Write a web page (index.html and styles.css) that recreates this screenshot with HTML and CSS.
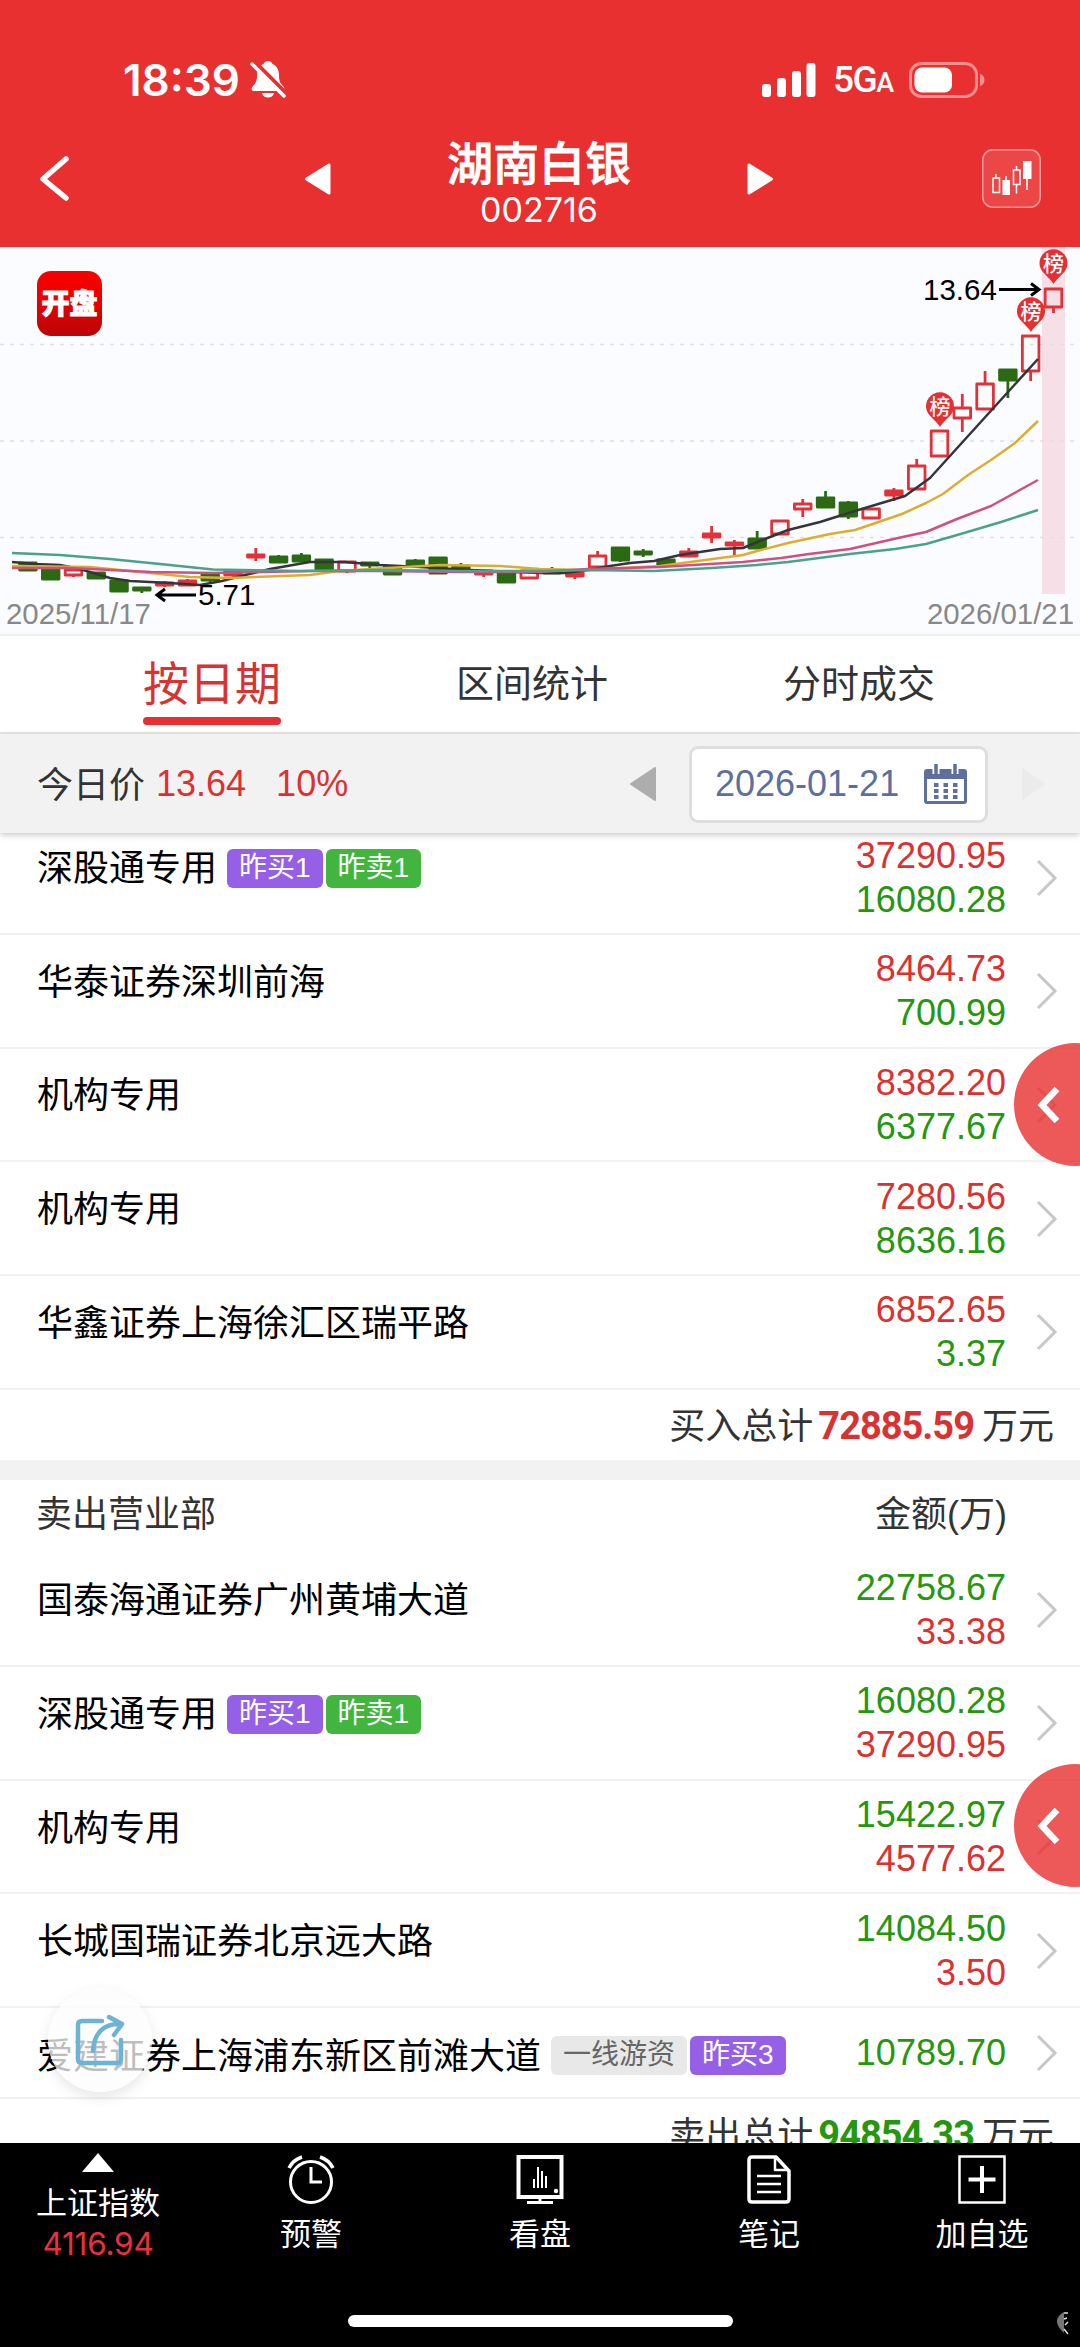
FILE: index.html
```html
<!DOCTYPE html>
<html lang="zh-CN">
<head>
    <meta charset="UTF-8">
    <title>湖南白银 002716</title>
    <link rel="stylesheet" href="styles.css">
</head>
<body>
    <div class="app">
        <header class="header">
            <div class="status-bar">
                <div class="status-left">
                    <span class="time">18:39</span>
                    <svg class="bell" width="36" height="40" viewBox="0 0 36 40">
                        <path d="M18 1c-2.500 0-4 1.500-4.500 3C9 6 7 10 7 15c0 6-1 8-4 11-2 2-2 5 1 5h28c3 0 3-3 1-5-3-3-4-5-4-11 0-5-2-9-6.500-11C22 2.500 20.500 1 18 1z" fill="#fff"/>
                        <path d="M12 33h12c-1 6-11 6-12 0z" fill="#fff"/>
                        <path d="M4 1L37 34" stroke="#e83030" stroke-width="4"/>
                        <path d="M2 4L34 36" stroke="#fff" stroke-width="3.500" stroke-linecap="round"/>
                    </svg>
                </div>
                <div class="status-right">
                    <svg width="54" height="34" viewBox="0 0 54 34" fill="#fff">
                        <rect x="0" y="21" width="9" height="13" rx="3"/>
                        <rect x="15" y="15" width="9" height="19" rx="3"/>
                        <rect x="30" y="8" width="9" height="26" rx="3"/>
                        <rect x="44.500" y="0" width="9" height="34" rx="3"/>
                    </svg>
                    <span class="network">5G<small>A</small></span>
                    <svg class="battery" width="77" height="36" viewBox="0 0 77 36">
                        <rect x="1.500" y="1.500" width="66" height="33" rx="11" fill="none" stroke="#f58f8f" stroke-width="3"/>
                        <rect x="5.500" y="5.500" width="37.500" height="25" rx="7.500" fill="#fff"/>
                        <path d="M71 12c6 1 6 11 0 12z" fill="#f58f8f"/>
                    </svg>
                </div>
            </div>
            <div class="nav-bar">
                <svg class="back" width="34" height="50" viewBox="0 0 34 50">
                    <path d="M29 5L6 25l23 19" fill="none" stroke="#fff" stroke-width="5.500" stroke-linecap="round" stroke-linejoin="round"/>
                </svg>
                <svg class="prev" width="28" height="34" viewBox="0 0 28 34">
                    <path d="M25 3v28L2.500 17z" fill="#fff" stroke="#fff" stroke-width="3" stroke-linejoin="round"/>
                </svg>
                <div class="stock">
                    <h1>湖南白银</h1>
                    <span>002716</span>
                </div>
                <svg class="next" width="28" height="34" viewBox="0 0 28 34">
                    <path d="M3 3v28l22.500-14z" fill="#fff" stroke="#fff" stroke-width="3" stroke-linejoin="round"/>
                </svg>
                <div class="kline-btn">
                    <svg width="59" height="59" viewBox="0 0 59 59" fill="none" stroke="#fff" stroke-width="1.500">
                        <path d="M14 25v4M24 27v5M34.500 17v4M34.500 35.500v9M45 30v11"/>
                        <rect x="11" y="29" width="6.500" height="14.500"/>
                        <rect x="20.500" y="31" width="7.500" height="15" fill="#fff" stroke="none"/>
                        <rect x="31.500" y="21" width="6.500" height="14.500"/>
                        <rect x="41" y="12" width="8.500" height="18" fill="#fff" stroke="none"/>
                    </svg>
                </div>
            </div>
        </header>

        <section class="chart">
            <svg id="kline" width="1080" height="389" viewBox="0 247 1080 389">
                <rect x="1042" y="247" width="23" height="347" fill="#f6dfe6"/>
                <g stroke="#dcdfe6" stroke-width="1.500" stroke-dasharray="4 6">
                    <path d="M0 347.500H1080" transform="translate(0 -3)"/>
                    <path d="M0 441H1080"/>
                    <path d="M0 537.500H1080"/>
                </g>
                <g id="candles"></g>
                <g fill="none" stroke-width="2.500" stroke-linejoin="round">
                    <polyline stroke="#33353b" points="12,562 35,564 60,565 80,569 110,578 130,581 170,583 200,585 222,581 245,575 270,569 310,562 330,562 345,562 380,565 420,567 470,570 540,573 565,573 588,570 610,566 630,563 654,561 680,555 720,549 743,548 765,539 788,530 820,522 855,511 905,496 930,478 998,403 1038,359"/>
                    <polyline stroke="#dcae30" points="12,566 90,567 130,571 190,577 230,578 310,575 340,571 370,569 440,565 500,566 540,569 588,570 660,566 743,555 757,551 788,543 830,534 855,530 902,514 926,503 943,494 968,475 991,460 1015,443 1038,421"/>
                    <polyline stroke="#cf4f84" points="12,568 70,568 151,572 213,573 262,572 310,571 380,571 460,572 540,572 588,569 660,567 743,562 781,558 809,554 850,549 898,538 926,532 957,519 991,506 1038,480"/>
                    <polyline stroke="#4aa28a" points="12,553 60,555 110,559 160,564 213,569.500 300,571 380,570 460,571 540,571 588,570 654,571 712,568 757,565 788,562 850,554 895,549 926,544 964,533 1001,522 1038,510"/>
                </g>
                <g fill="none" stroke="#000" stroke-width="3">
                    <path d="M196 595H158M165 589l-8 6 8 6"/>
                    <path d="M999 289.500H1038M1031 283.500l8 6-8 6"/>
                </g>
                <g class="price-mark">
                    <text x="198" y="605">5.71</text>
                    <text x="923" y="300">13.64</text>
                </g>
                <g class="badges">
                    <g transform="translate(1053.500 263)"><path d="M-13.500 4a14 14 0 1 1 27 0C11 11 4 14 0 21-4 14-11 11-13.500 4z"/><text y="7.500">榜</text></g>
                    <g transform="translate(1031 311)"><path d="M-13.500 4a14 14 0 1 1 27 0C11 11 4 14 0 21-4 14-11 11-13.500 4z"/><text y="7.500">榜</text></g>
                    <g transform="translate(940 406)"><path d="M-13.500 4a14 14 0 1 1 27 0C11 11 4 14 0 21-4 14-11 11-13.500 4z"/><text y="7.500">榜</text></g>
                </g>
                <g class="axis">
                    <text x="6" y="624">2025/11/17</text>
                    <text x="1074" y="624" text-anchor="end">2026/01/21</text>
                </g>
            </svg>
            <div class="logo">开盘</div>
        </section>

        <nav class="tabs">
            <a class="tab active">按日期</a>
            <a class="tab">区间统计</a>
            <a class="tab">分时成交</a>
        </nav>

        <div class="date-bar">
            <span class="label">今日价</span>
            <span class="red price">13.64</span>
            <span class="red percent">10%</span>
            <svg class="date-prev" width="28" height="36" viewBox="0 0 28 36"><path d="M26 2v32L2 18z" fill="#adadad" stroke="#adadad" stroke-width="2" stroke-linejoin="round"/></svg>
            <div class="date-box">
                <span>2026-01-21</span>
                <svg width="43" height="40" viewBox="0 0 43 40">
                    <path d="M3 5h37q3 0 3 3v29q0 3-3 3H3q-3 0-3-3V8q0-3 3-3z" fill="#5c6f9e"/>
                    <path d="M3 15h37v22H3z" fill="#fff"/>
                    <path d="M12 0v10M31 0v10" stroke="#fff" stroke-width="7"/>
                    <path d="M12 0v10M31 0v10" stroke="#5c6f9e" stroke-width="3.500"/>
                    <path d="M10 21h24M10 27h24M10 33h24" stroke="#5c6f9e" stroke-width="4" stroke-dasharray="4.500 5"/>
                </svg>
            </div>
            <svg class="date-next" width="28" height="36" viewBox="0 0 28 36"><path d="M2 2v32l24-16z" fill="#ebebeb"/></svg>
        </div>

        <main class="list">
            <div class="rows" id="buy-rows"></div>
            <div class="total">买入总计<b class="red">72885.59</b>万元</div>
            <div class="gap"></div>
            <div class="list-head"><span>卖出营业部</span><span>金额(万)</span></div>
            <div class="rows sell" id="sell-rows"></div>
            <div class="total">卖出总计<b class="green">94854.33</b>万元</div>
        </main>

        <footer class="toolbar">
            <div class="tool index">
                <svg width="32" height="19" viewBox="0 0 32 19"><path d="M16 0l16 19H0z" fill="#fff"/></svg>
                <span>上证指数</span>
                <em>4116.94</em>
            </div>
            <div class="tool">
                <svg width="48" height="49" viewBox="0 0 48 49" fill="none" stroke="#fff" stroke-width="3">
                    <circle cx="24" cy="27" r="20.500"/>
                    <path d="M24 12v15h11"/>
                    <path d="M2 13Q6 5 15 2M46 13Q42 5 33 2" stroke-width="3.500"/>
                </svg>
                <span>预警</span>
            </div>
            <div class="tool">
                <svg width="48" height="49" viewBox="0 0 48 49" fill="none" stroke="#fff">
                    <path d="M2.500 2h43v40h-43z" stroke-width="4"/>
                    <path d="M24 42v5M11 47.500h26" stroke-width="3"/>
                    <path d="M18 24v9M22 12v21M26 16v17M30 21v12" stroke-width="2"/>
                    <circle cx="40" cy="36" r="2.200" fill="#fff" stroke="none"/>
                </svg>
                <span>看盘</span>
            </div>
            <div class="tool">
                <svg width="44" height="49" viewBox="0 0 44 49" fill="none" stroke="#fff" stroke-width="3.500" stroke-linejoin="round">
                    <path d="M5 2h24l13 14v28q0 3-3 3H5q-3 0-3-3V5q0-3 3-3z"/>
                    <path d="M28 2v13h13" stroke-width="2.500"/>
                    <path d="M10 21h24M10 29h24M10 37h24" stroke-width="2.500"/>
                </svg>
                <span>笔记</span>
            </div>
            <div class="tool">
                <svg width="48" height="49" viewBox="0 0 48 49" fill="none" stroke="#fff">
                    <path d="M1.500 1.500h45v46h-45z" stroke-width="2.500"/>
                    <path d="M24 11v27M10.500 24.500h27" stroke-width="4"/>
                </svg>
                <span>加自选</span>
            </div>
            <div class="home-bar"></div>
            <svg class="corner" width="16" height="24" viewBox="0 0 16 24">
                <path d="M10 1Q-4 9 10 22z" fill="#777"/>
                <path d="M10 2h4M10 8l3-1M11 14l3-3M10 18l4 5" stroke="#ddd" stroke-width="1.500"/>
            </svg>
        </footer>

        <div class="drawer drawer-top">
            <svg width="26" height="40" viewBox="0 0 26 40"><path d="M21 4L6 20l15 16" fill="none" stroke="#fff" stroke-width="6.500"/></svg>
        </div>
        <div class="drawer drawer-bottom">
            <svg width="26" height="40" viewBox="0 0 26 40"><path d="M21 4L6 20l15 16" fill="none" stroke="#fff" stroke-width="6.500"/></svg>
        </div>
        <div class="share">
            <svg width="52" height="54" viewBox="0 0 52 54" fill="none" stroke="#6cb3d5" stroke-width="4.500" stroke-linecap="round" stroke-linejoin="round">
                <path d="M28 8H8q-4 0-4 4v34q0 4 4 4h35q4 0 4-4V27"/>
                <path d="M19 38C20 20 30 10 47 11M35 4l13 7-8 11"/>
            </svg>
        </div>
    </div>

    <script>
        // [body top, body bottom, wick top, wick bottom, type]  g = down, r = up, h = up (hollow)
        const candles = [
            [563, 570, 563, 571, 'g'], [570, 579, 570, 579, 'g'], [570, 575, 569, 577, 'h'],
            [573, 578, 572, 578, 'g'], [581, 591, 580, 591, 'g'], [588, 590, 588, 593, 'g'],
            [583, 585, 581, 587, 'r'], [581, 585, 579, 585, 'r'], [575, 580, 574, 582, 'g'],
            [571, 575, 570, 577, 'r'], [555, 557, 548, 561, 'r'], [557, 562, 555, 562, 'g'],
            [556, 561, 553, 561, 'g'], [560, 569, 559, 569, 'g'], [562, 571, 561, 573, 'h'],
            [563, 565, 562, 568, 'g'], [567, 574, 566, 574, 'g'], [561, 565, 559, 567, 'g'],
            [558, 573, 557, 573, 'g'], [566, 569, 563, 570, 'g'], [571, 574, 570, 577, 'r'],
            [572, 582, 571, 583, 'g'], [571, 578, 570, 578, 'h'], [571, 573, 567, 574, 'g'],
            [572, 576, 571, 579, 'r'], [556, 567, 551, 568, 'h'], [548, 560, 548, 562, 'g'],
            [552, 554, 549, 557, 'g'], [560, 565, 560, 566, 'g'], [552, 556, 548, 556, 'r'],
            [534, 537, 526, 543, 'r'], [543, 545, 540, 556, 'r'], [539, 548, 531, 548, 'g'],
            [521, 534, 521, 534, 'h'], [504, 509, 499, 517, 'h'], [498, 507, 491, 508, 'g'],
            [503, 516, 501, 519, 'g'], [509, 518, 508, 518, 'h'], [491, 495, 488, 501, 'r'],
            [466, 489, 459, 489, 'h'], [431, 456, 431, 456, 'h'], [408, 418, 394, 432, 'h'],
            [384, 409, 371, 409, 'h'], [370, 380, 370, 398, 'g'], [336, 371, 336, 381, 'h'],
            [289, 307, 289, 313, 'h']
        ];
        document.getElementById('candles').innerHTML = candles.map(([top, bottom, high, low, type], i) => {
            const x = 27.9 + i * 22.79;
            return `<g class="candle ${type}">
                <path d="M${x} ${high}V${top}M${x} ${bottom}V${low}"/>
                <rect x="${x - 8.3}" y="${top}" width="16.6" height="${bottom - top}"/>
            </g>`;
        }).join('');

        const zsBuy1 = ['昨买1', 'purple'];
        const zsSell1 = ['昨卖1', 'lime'];
        const buyRows = [
            ['深股通专用', '37290.95', '16080.28', [zsBuy1, zsSell1]],
            ['华泰证券深圳前海', '8464.73', '700.99'],
            ['机构专用', '8382.20', '6377.67'],
            ['机构专用', '7280.56', '8636.16'],
            ['华鑫证券上海徐汇区瑞平路', '6852.65', '3.37']
        ];
        const sellRows = [
            ['国泰海通证券广州黄埔大道', '22758.67', '33.38'],
            ['深股通专用', '16080.28', '37290.95', [zsBuy1, zsSell1]],
            ['机构专用', '15422.97', '4577.62'],
            ['长城国瑞证券北京远大路', '14084.50', '3.50'],
            ['爱建证券上海浦东新区前滩大道', '10789.70', '', [['一线游资', 'gray'], ['昨买3', 'purple']]]
        ];
        function renderRows(id, rows) {
            document.getElementById(id).innerHTML = rows.map(([name, first, second, tags = []]) => `
                <div class="row${second ? '' : ' single'}">
                    <div class="name">${name}</div>
                    <div class="tags">${tags.map(([text, color]) => `<span class="tag ${color}">${text}</span>`).join('')}</div>
                    <div class="amounts"><span>${first}</span>${second ? `<span>${second}</span>` : ''}</div>
                    <svg class="arrow" width="22" height="38" viewBox="0 0 22 38"><path d="M2 2l17 17L2 36" fill="none" stroke="#c7c7c7" stroke-width="3"/></svg>
                </div>`).join('');
        }
        renderRows('buy-rows', buyRows);
        renderRows('sell-rows', sellRows);
    </script>
</body>
</html>
```

FILE: styles.css
```css
* {
    box-sizing: border-box;
}

body {
    margin: 0;
    font-family: "Liberation Sans", "Noto Sans CJK SC", sans-serif;
    font-size: 36px;
    color: #333;
    background: #fff;
}

svg {
    display: block;
    flex-shrink: 0;
}

.app {
    position: relative;
    display: flex;
    flex-direction: column;
    width: 1080px;
    height: 2347px;
    overflow: hidden;
}

.red {
    color: #d93232;
}

.green {
    color: #25960f;
}

/* header */
.header {
    height: 247px;
    background: #e83030;
    color: #fff;
    font-family: Inter, "Noto Sans CJK SC", sans-serif;
}

.status-bar {
    display: flex;
    justify-content: space-between;
    align-items: center;
    height: 132px;
    padding: 27px 94px 0 123px;
}

.status-left,
.status-right {
    display: flex;
    align-items: center;
}

.time {
    font-size: 44px;
    font-weight: 600;
    line-height: 50px;
}

.bell {
    margin-left: 10px;
}

.network {
    width: 76px;
    padding-left: 17px;
    font-family: Roboto, sans-serif;
    font-size: 37px;
    font-weight: 500;
    letter-spacing: -1.5px;
    white-space: nowrap;
}

.network small {
    font-size: 27px;
}

.battery {
    margin-left: 17px;
}

.nav-bar {
    display: flex;
    align-items: center;
    height: 115px;
    padding: 0 39px 0 37px;
}

.back {
    margin-top: -22px;
}

.prev {
    margin: -22px 0 0 233px;
}

.stock {
    width: 414px;
    margin-top: -16px;
    text-align: center;
}

.stock h1 {
    margin: 0;
    font-size: 46px;
    font-weight: 500;
    line-height: 60px;
    -webkit-text-stroke: .8px #fff;
}

.stock span {
    display: block;
    margin-top: -4px;
    font-size: 34px;
    line-height: 42px;
}

.next {
    margin-top: -22px;
}

.kline-btn {
    width: 59px;
    height: 59px;
    margin: -22px 0 0 auto;
    border-radius: 11px;
    background: #ec4747;
    box-shadow: inset 0 0 0 1.5px #f49a9a;
}

/* chart */
.chart {
    position: relative;
    height: 389px;
    background: #fbfcff;
    box-shadow: inset 0 -2px #edeff1;
}

.candle {
    stroke-width: 2.8;
    stroke: #e03238;
    stroke-linejoin: round;
}

.candle rect {
    fill: #e03238;
}

.candle.h rect {
    fill: none;
}

.candle.g {
    stroke: #2b6a13;
}

.candle.g rect {
    fill: #2b6a13;
}

.price-mark {
    font-size: 29.5px;
    fill: #000;
}

.axis {
    font-size: 29.4px;
    fill: #888;
}

.badges {
    font-size: 21px;
    font-weight: 500;
    text-anchor: middle;
    fill: #e43033;
}

.badges text {
    fill: #fff;
}

.logo {
    position: absolute;
    left: 37px;
    top: 24px;
    width: 65px;
    height: 65px;
    border-radius: 14px;
    background: linear-gradient(#f80000, #f00000 35%, #b90508);
    color: #fff;
    font-size: 28px;
    font-weight: 900;
    line-height: 64px;
    text-align: center;
    -webkit-text-stroke: 1px #fff;
}

.logo::first-line {
    line-height: 68px;
}

/* tabs */
.tabs {
    display: flex;
    justify-content: space-between;
    height: 98px;
    padding: 0 145px 0 143px;
    border-bottom: 2px solid #e8e8e8;
}

.tab {
    font-size: 38px;
    line-height: 96px;
}

.tab.active {
    position: relative;
    color: #d93232;
    font-size: 46px;
}

.tab.active::after {
    content: "";
    position: absolute;
    left: 0;
    right: 0;
    bottom: 7px;
    height: 8px;
    border-radius: 4px;
    background: #e43033;
}

.date-bar {
    position: relative;
    z-index: 1;
    display: flex;
    align-items: center;
    height: 99px;
    padding-left: 37px;
    background: #f2f2f2;
    box-shadow: 0 2px 6px rgba(0, 0, 0, .22);
}

.label {
    margin-top: -4px;
}

.price {
    margin-left: 11px;
}

.percent {
    margin-left: 30px;
}

.date-prev {
    margin-left: auto;
}

.date-box {
    display: flex;
    align-items: center;
    width: 299px;
    height: 77px;
    margin: 1px 32px 0;
    padding-left: 23px;
    border: 3px solid #dedede;
    border-radius: 9px;
    background: #fff;
    color: #5c6f9e;
}

.date-box svg {
    margin: -1px 0 0 25px;
}

.date-next {
    margin-right: 32px;
}

/* list */
.list {
    flex: 1;
    overflow: hidden;
}

#buy-rows {
    margin-top: -11.8px;
}

.row {
    display: flex;
    align-items: center;
    height: 113.7px;
    padding: 0 22px 0 37px;
    border-bottom: 2px solid #f1f1f1;
    white-space: nowrap;
}

.row.single {
    height: 91px;
}

.name {
    margin-bottom: 24px;
    color: #000;
}

.tags {
    display: flex;
    gap: 3px;
    margin: 0 0 17px 10px;
}

.single .name {
    margin-bottom: 0;
}

.single .tags {
    margin-bottom: -5px;
}

.tag {
    height: 39px;
    padding: 0 12px;
    border-radius: 6px;
    font-size: 28px;
    line-height: 38px;
    color: #fff;
}

.purple {
    background: #955fe6;
}

.lime {
    background: #42b53e;
}

.gray {
    background: #e8e8e8;
    color: #666;
}

.amounts {
    display: flex;
    flex-direction: column;
    margin-left: auto;
    padding-top: 1px;
    text-align: right;
    line-height: 44px;
}

.amounts span:first-child,
.sell .amounts span:last-child {
    color: #d93232;
}

.amounts span:last-child,
.sell .amounts span:first-child {
    color: #25960f;
}

.arrow {
    margin: 1px 0 0 30px;
}

.total {
    height: 70.7px;
    padding-right: 26px;
    text-align: right;
    line-height: 73px;
}

.total b {
    margin: 0 8px 0 5px;
    font-family: Roboto, sans-serif;
    font-size: 38px;
    letter-spacing: -1px;
}

.gap {
    height: 20px;
    background: #f2f2f2;
}

.list-head {
    display: flex;
    justify-content: space-between;
    height: 73px;
    padding: 0 73px 0 36px;
    line-height: 70px;
}

/* bottom toolbar */
.toolbar {
    position: relative;
    z-index: 1;
    display: grid;
    grid-template-columns: 196px 230px 228px 230px 196px;
    height: 204px;
    background: #000;
    color: #fff;
    font-size: 31px;
}

.tool {
    display: flex;
    flex-direction: column;
    align-items: center;
    gap: 9px;
    padding-top: 12px;
    line-height: 44px;
}

.tool.index {
    padding-top: 10px;
    gap: 10px;
}

.tool em {
    margin-top: -14px;
    font-family: Inter, sans-serif;
    font-size: 31.5px;
    font-style: normal;
    color: #e8303f;
    letter-spacing: -.2px;
}

.home-bar {
    position: absolute;
    left: 348px;
    bottom: 20px;
    width: 385px;
    height: 12px;
    border-radius: 6px;
    background: #fff;
}

.corner {
    position: absolute;
    right: 10px;
    bottom: 12px;
}

/* floating buttons */
.drawer {
    position: absolute;
    right: -57px;
    display: flex;
    align-items: center;
    width: 123px;
    height: 123px;
    padding-left: 22px;
    border-radius: 50%;
    background: rgba(232, 48, 48, .8);
}

.drawer-top {
    top: 1043px;
}

.drawer-bottom {
    top: 1764px;
}

.share {
    position: absolute;
    left: 48px;
    top: 1988px;
    display: flex;
    align-items: center;
    justify-content: center;
    width: 104px;
    height: 104px;
    border-radius: 50%;
    background: rgba(252, 252, 252, .75);
    box-shadow: 0 5px 14px rgba(0, 0, 0, .1);
}
```
